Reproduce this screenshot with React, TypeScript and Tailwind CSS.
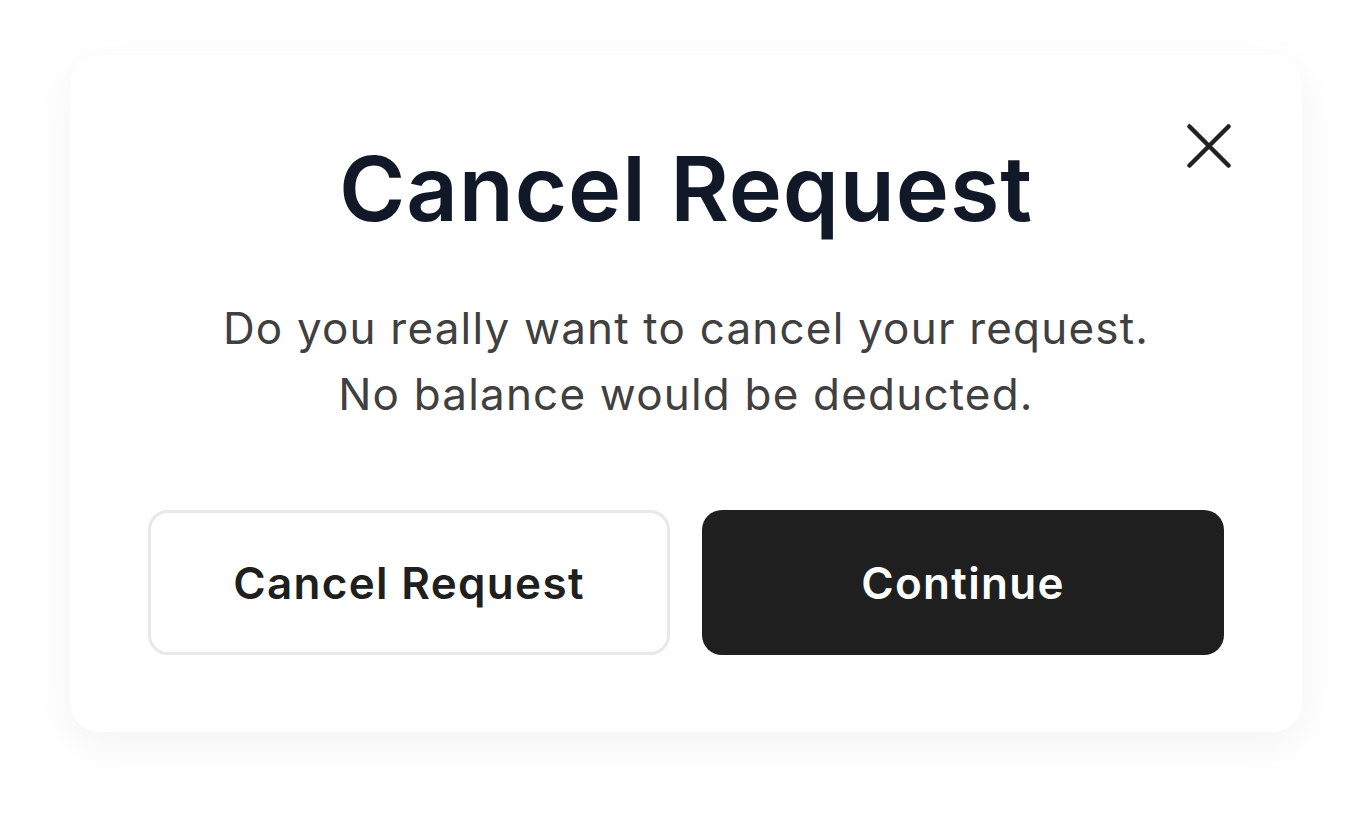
export default function App() {
  return (
    <div className="min-h-screen bg-white px-[70px] pt-[55px] font-['Inter',sans-serif]">
      <div className="relative flex flex-col items-center rounded-[30px] bg-white px-[78px] pt-[80px] pb-[77px] shadow-[0_12px_44px_rgba(0,0,0,0.05)]">
        <button
          aria-label="Close"
          className="absolute right-[71px] top-[69px] flex h-[44px] w-[44px] shrink-0 items-center justify-center text-[#222222]"
        >
          <svg className="shrink-0" width="44" height="44" viewBox="0 0 44 44" fill="none" stroke="currentColor" strokeWidth="4.5" strokeLinecap="round">
            <path d="M2.5 2.5l39 39M41.5 2.5l-39 39" />
          </svg>
        </button>

        <h1 className="text-[90px] leading-[1.2] font-semibold tracking-[0.01em] text-[#111827]">
          Cancel Request
        </h1>

        <p className="mt-[52px] text-center text-[44px] leading-[66px] tracking-[0.027em] text-[#404040]">
          Do you really want to cancel your request.
          <br />
          No balance would be deducted.
        </p>

        <div className="mt-[83px] grid w-full grid-cols-2 gap-[32px]">
          <button className="h-[145px] rounded-[20px] border-[3px] border-[#e8e8e8] bg-white text-[44px] font-semibold tracking-[0.03em] text-[#1f1f1f]">
            Cancel Request
          </button>
          <button className="h-[145px] rounded-[20px] bg-[#1f1f1f] text-[44px] font-semibold tracking-[0.03em] text-white">
            Continue
          </button>
        </div>
      </div>
    </div>
  );
}
